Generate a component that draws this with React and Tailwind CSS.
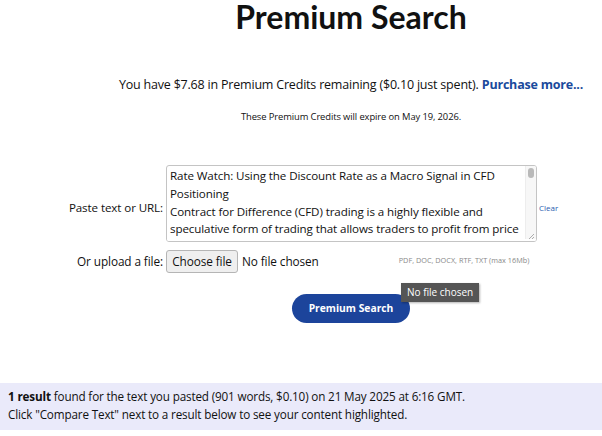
export default function App() {
  return (
    <div className="w-[602px] h-[436px] bg-white overflow-hidden relative font-['Open_Sans',sans-serif] text-[#111]">
      <div className="pl-[100px]">
        <h1 className="text-center font-['Lato',sans-serif] font-bold text-[32px] leading-[32px] pt-[1px] text-[#111]">
          Premium Search
        </h1>
        <p className="text-center text-[12.5px] leading-[18px] mt-[43px] tracking-[-0.2px]">
          You have $7.68 in Premium Credits remaining ($0.10 just spent).{" "}
          <a className="font-bold text-[#1a4a9c]">Purchase more...</a>
        </p>
        <p className="text-center text-[9.4px] leading-[14px] mt-[16px] tracking-[-0.1px]">
          These Premium Credits will expire on May 19, 2026.
        </p>
      </div>

      <div className="flex items-center mt-[41px]">
        <div className="w-[164px] pt-[8px] text-right text-[11.6px] pr-[1px] tracking-[-0.1px]">Paste text or URL:</div>
        <div className="ml-[2px] w-[371px] h-[77px] border border-[#c4c4c4] rounded-[3px] bg-white relative overflow-hidden">
          <div className="pl-[3px] pt-[1px] pr-[14px] text-[11.6px] leading-[17.8px] tracking-[-0.1px] text-[#111]">
            Rate Watch: Using the Discount Rate as a Macro Signal in CFD Positioning
            <br />
            Contract for Difference (CFD) trading is a highly flexible and speculative form of trading that allows traders to profit from price movements
          </div>
          <div className="absolute right-0 top-0 bottom-0 w-[11px] bg-[#f7f7f7] border-l border-[#ededed]">
            <div className="mx-auto mt-[2px] w-[6px] h-[10px] rounded-full bg-[#b9b9b9]" />
          </div>
          <div className="absolute left-0 right-0 bottom-0 h-[2px] bg-white" />
          <svg className="absolute right-[1px] bottom-[1px]" width="7" height="7" viewBox="0 0 7 7">
            <path d="M6 1L1 6M6 4L4 6" stroke="#999" strokeWidth="0.8" />
          </svg>
        </div>
        <a className="ml-[2px] pt-[8px] text-[8px] text-[#2a5db0]">Clear</a>
      </div>

      <div className="flex items-center mt-[8px]">
        <div className="w-[164px] text-right text-[11.8px] pr-[1px] tracking-[-0.1px]">Or upload a file:</div>
        <div className="ml-[2px] h-[23px] w-[72px] justify-center border border-[#b5b5b5] rounded-[3px] bg-[#efefef] text-[11.8px] flex items-center tracking-[-0.1px]">
          Choose file
        </div>
        <div className="ml-[4px] text-[11.8px] tracking-[-0.1px]">No file chosen</div>
        <div className="ml-[80px] mt-[-2px] text-[7.3px] text-[#888]">PDF, DOC, DOCX, RTF, TXT (max 16Mb)</div>
      </div>

      <div className="flex mt-[21px] pl-[292px] relative">
        <button className="w-[118px] h-[29px] rounded-full bg-[#1c449b] text-white text-[10.3px] font-bold">
          Premium Search
        </button>
        <div className="absolute left-[401px] top-[-11px] h-[19px] px-[6px] bg-[#555] text-white text-[10px] leading-[19px] shadow-[1px_1px_2px_rgba(0,0,0,0.3)]">
          No file chosen
        </div>
      </div>

      <div className="mt-[60px] h-[47px] bg-[#eaeafa] pl-[8px] pt-[4px] text-[11.7px] leading-[18px] tracking-[-0.15px]">
        <div>
          <span className="font-bold">1 result</span> found for the text you pasted (901 words, $0.10) on 21 May 2025 at 6:16 GMT.
        </div>
        <div>Click "Compare Text" next to a result below to see your content highlighted.</div>
      </div>
    </div>
  );
}
